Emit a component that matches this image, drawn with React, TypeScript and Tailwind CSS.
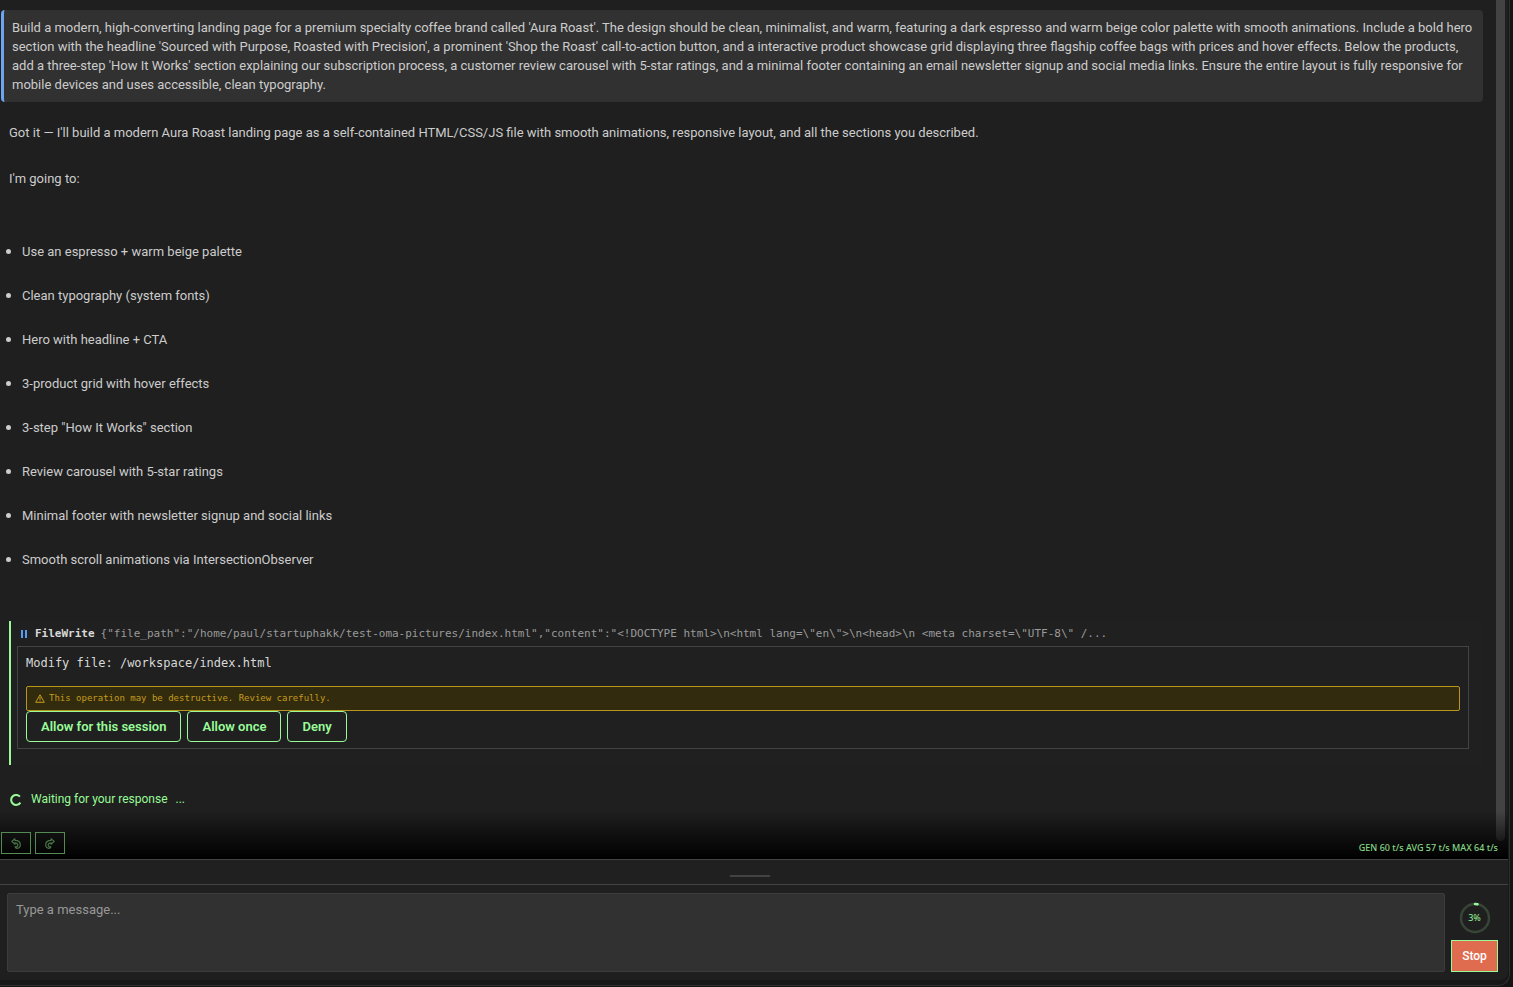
interface ButtonProps {
  label: string;
}

const PROMPT =
  "Build a modern, high-converting landing page for a premium specialty coffee brand called 'Aura Roast'. The design should be clean, minimalist, and warm, featuring a dark espresso and warm beige color palette with smooth animations. Include a bold hero section with the headline 'Sourced with Purpose, Roasted with Precision', a prominent 'Shop the Roast' call-to-action button, and a interactive product showcase grid displaying three flagship coffee bags with prices and hover effects. Below the products, add a three-step 'How It Works' section explaining our subscription process, a customer review carousel with 5-star ratings, and a minimal footer containing an email newsletter signup and social media links. Ensure the entire layout is fully responsive for mobile devices and uses accessible, clean typography.";

const PLAN = [
  'Use an espresso + warm beige palette',
  'Clean typography (system fonts)',
  'Hero with headline + CTA',
  '3-product grid with hover effects',
  '3-step "How It Works" section',
  'Review carousel with 5-star ratings',
  'Minimal footer with newsletter signup and social links',
  'Smooth scroll animations via IntersectionObserver',
];

const TOOL_ARGS =
  '{"file_path":"/home/paul/startuphakk/test-oma-pictures/index.html","content":"<!DOCTYPE html>\\n<html lang=\\"en\\">\\n<head>\\n <meta charset=\\"UTF-8\\" /...';

const ChoiceButton = ({ label }: ButtonProps) => (
  <button
    type="button"
    className="h-[31px] rounded border border-[#98fb98] px-3.5 text-[13px] font-semibold text-[#98fb98]"
  >
    {label}
  </button>
);

const HookArrow = ({ className }: { className?: string }) => (
  <svg viewBox="0 0 10 11" className={className} fill="none" stroke="currentColor" strokeLinejoin="round">
    <path
      strokeWidth="1.2"
      d="M.8 3.4 3.9.8v1.5C7.2 2.3 9.3 4.2 9.3 6.8c0 2.2-1.6 3.5-3.3 3.5-1.2 0-1.9-.8-1.9-1.5 1.8.3 2.7-.7 2.7-1.8 0-1.2-1.1-2.2-2.9-2.2v1.4Z"
    />
  </svg>
);

const HistoryButtons = () => (
  <div className="absolute bottom-[5px] left-px flex gap-1">
    <button
      type="button"
      aria-label="Undo"
      className="flex h-[22px] w-[30px] items-center justify-center border border-[#548a54] text-[#477547]"
    >
      <HookArrow className="h-[11px] w-[10px]" />
    </button>
    <button
      type="button"
      aria-label="Redo"
      className="flex h-[22px] w-[30px] items-center justify-center border border-[#548a54] text-[#477547]"
    >
      <HookArrow className="h-[11px] w-[10px] -scale-x-100" />
    </button>
  </div>
);

const ToolCall = () => (
  <section className="mt-[52px] mr-[13px] ml-[9px] h-36 border-l-2 border-[#98fb98] bg-[#202020] pt-0.5 pl-1.5 font-['DejaVu_Sans_Mono',monospace]">
    <div className="mb-0.5 flex h-[21px] items-center pl-1 text-[11px] leading-4">
      <svg viewBox="0 0 6 8" className="mr-2 h-2 w-1.5 shrink-0 fill-[#5b9bf5]">
        <path d="M0 0h2v8H0zM4 0h2v8H4z" />
      </svg>
      <span className="font-bold text-[#d8d8d8]">FileWrite</span>
      <span className="ml-1.5 truncate text-[#9a9a9a]">{TOOL_ARGS}</span>
    </div>
    <div className="mr-[14px] h-[103px] border border-[#434343] pr-2 pl-2">
      <p className="mt-2 h-4 text-[12px] leading-4 text-[#d8d8d8]">Modify file: /workspace/index.html</p>
      <p className="mt-[15px] flex h-[25px] items-center gap-1 rounded-xs border border-[#b8961c] bg-[#332b0d] px-2 text-[9px] text-[#c49c1f]">
        <svg viewBox="0 0 10 9" className="h-[9px] w-[10px]" fill="none" stroke="currentColor" strokeLinejoin="round">
          <path d="M5 .8 9.3 8.3H.7ZM5 3v3M5 6.7v.8" />
        </svg>
        This operation may be destructive. Review carefully.
      </p>
      <div className="flex gap-1.5 font-['Roboto',sans-serif]">
        <ChoiceButton label="Allow for this session" />
        <ChoiceButton label="Allow once" />
        <ChoiceButton label="Deny" />
      </div>
    </div>
  </section>
);

const Transcript = () => (
  <main className="relative flex min-h-0 flex-1 overflow-hidden">
    <div className="min-w-0 flex-1 text-[13px] leading-[19px]">
      <p className="mt-[10px] mr-[13px] ml-px rounded border-l-3 border-[#6ea3f0] bg-[#313131] py-2 pr-1 pl-2">
        {PROMPT}
      </p>
      <p className="mt-[21px] px-[9px]">
        Got it — I'll build a modern Aura Roast landing page as a self-contained HTML/CSS/JS file with smooth
        animations, responsive layout, and all the sections you described.
      </p>
      <p className="mt-[27px] px-[9px]">I'm going to:</p>
      <ul className="mt-[54px] space-y-[25px] pl-1.5">
        {PLAN.map((item) => (
          <li key={item} className="flex items-center gap-[11px]">
            <span className="size-[5px] rounded-full bg-[#cccccc]" />
            {item}
          </li>
        ))}
      </ul>
      <ToolCall />
      <div className="mt-[25px] flex items-center pl-[10px] text-[12px] text-[#98fb98]">
        <svg viewBox="0 0 12 12" className="mr-[9px] size-3" fill="none" stroke="currentColor" strokeWidth="2">
          <path d="M9.9 2.6A5 5 0 1 0 10.4 8.6" />
        </svg>
        Waiting for your response <span className="ml-2">...</span>
      </div>
    </div>
    <div className="mr-[3px] mb-[18px] w-[9px] rounded-b-full bg-[#434343]" />
    <div className="pointer-events-none absolute inset-x-0 bottom-0 h-12 bg-linear-to-b from-transparent to-black" />
    <HistoryButtons />
    <p className="absolute right-[10px] bottom-1 font-['Noto_Sans',sans-serif] text-[9px] leading-[14px] font-medium text-[#85d685]">
      GEN 60 t/s AVG 57 t/s MAX 64 t/s
    </p>
  </main>
);

const Composer = () => (
  <footer className="flex gap-1.5 py-2 pr-[10px] pl-[7px]">
    <textarea
      aria-label="Message"
      placeholder="Type a message..."
      className="h-[79px] flex-1 resize-none rounded-xs border border-[#3c3c3c] bg-[#313131] px-2 py-1.5 text-[13px] leading-[19px] placeholder:text-[#989898]"
    />
    <div className="flex w-[47px] flex-col items-center justify-between pt-[9px]">
      <div className="relative flex size-8 items-center justify-center font-['Noto_Sans',sans-serif] text-[9px] text-[#98fb98]">
        <svg viewBox="0 0 32 32" className="absolute inset-0 -rotate-90" fill="none" strokeWidth="2.5">
          <circle cx="16" cy="16" r="14" stroke="#364536" />
          <circle cx="16" cy="16" r="14" stroke="#98fb98" pathLength="100" strokeDasharray="3 97" strokeLinecap="round" />
        </svg>
        3%
      </div>
      <button
        type="button"
        className="h-8 w-full border border-[#98fb98] bg-[#e06c4f] text-[12px] font-medium text-white"
      >
        Stop
      </button>
    </div>
  </footer>
);

const App = () => (
  <div className="h-screen bg-[#151313] pr-[3px] pb-px font-['Roboto',sans-serif] text-[#cccccc]">
    <div className="h-full rounded-br-xl border-r border-b border-[#303030] bg-[#181818] pr-px pb-[5px]">
      <div className="flex h-full flex-col overflow-hidden rounded-br-lg bg-[#1f1f1f]">
        <Transcript />
        <div className="flex h-[26px] shrink-0 justify-center border-y border-[#434343] bg-[#202020] pt-[15px] pr-2">
          <div className="h-0.5 w-10 bg-[#434343]" />
        </div>
        <Composer />
      </div>
    </div>
  </div>
);

export default App;
